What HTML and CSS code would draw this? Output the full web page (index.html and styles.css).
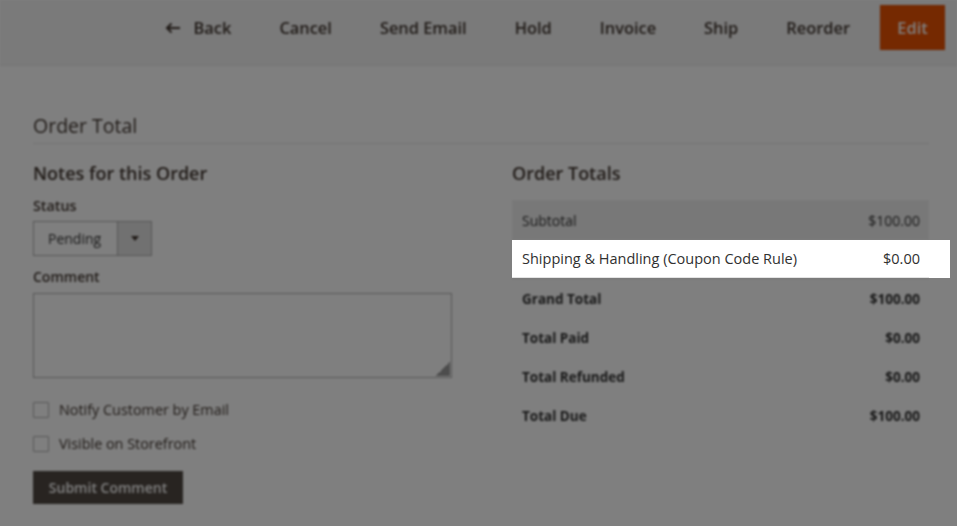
FILE: index.html
```html
<!DOCTYPE html>
<html>
<head>
<meta charset="utf-8">
<link rel="stylesheet" href="styles.css">
</head>
<body>
<div class="stage">
  <div class="page">
    <header class="actions">
      <button class="act back"><svg class="arrow" viewBox="0 0 16 12" width="16" height="12"><path d="M15 6H2M6.5 1.5L2 6l4.5 4.5" fill="none" stroke="currentColor" stroke-width="2"/></svg>Back</button>
      <button class="act">Cancel</button>
      <button class="act">Send Email</button>
      <button class="act">Hold</button>
      <button class="act">Invoice</button>
      <button class="act">Ship</button>
      <button class="act">Reorder</button>
      <button class="act primary">Edit</button>
    </header>
    <main class="content">
      <h2 class="section-title">Order Total</h2>
      <div class="cols">
        <section class="notes">
          <h3 class="sub-title">Notes for this Order</h3>
          <label class="field-label">Status</label>
          <div class="select"><span class="select-value">Pending</span><span class="select-arrow"></span></div>
          <label class="field-label comment-label">Comment</label>
          <div class="textarea"><span class="grip"></span></div>
          <div class="check"><span class="box"></span>Notify Customer by Email</div>
          <div class="check"><span class="box"></span>Visible on Storefront</div>
          <button class="submit">Submit Comment</button>
        </section>
        <section class="totals">
          <h3 class="sub-title">Order Totals</h3>
          <div class="table">
            <div class="row subtotal"><span>Subtotal</span><span>$100.00</span></div>
            <div class="row plain"><span>Shipping &amp; Handling (Coupon Code Rule)</span><span>$0.00</span></div>
            <div class="row strong"><span>Grand Total</span><span>$100.00</span></div>
            <div class="row strong"><span>Total Paid</span><span>$0.00</span></div>
            <div class="row strong"><span>Total Refunded</span><span>$0.00</span></div>
            <div class="row strong"><span>Total Due</span><span>$100.00</span></div>
          </div>
        </section>
      </div>
    </main>
  </div>
  <div class="overlay"></div>
  <div class="spotlight">
    <div class="spot-row"><span>Shipping &amp; Handling (Coupon Code Rule)</span><span>$0.00</span></div>
  </div>
</div>
</body>
</html>
```
FILE: styles.css
```css
* { box-sizing: border-box; }
html, body { margin: 0; padding: 0; }
body {
  font-family: "Open Sans", "Liberation Sans", sans-serif;
  color: #41362f;
  background: #fff;
  width: 957px;
  height: 526px;
  overflow: hidden;
}
.stage { position: relative; width: 957px; height: 526px; overflow: hidden; }
.page { filter: blur(1.1px); background: #fff; height: 526px; }

.actions {
  height: 66px;
  background: #f4f4f4;
  border-bottom: 1px solid #e8e8e8;
  display: flex;
  align-items: center;
  justify-content: flex-end;
  padding: 0 12px 10px 0;
}
.act {
  font-family: inherit;
  font-size: 16.4px;
  font-weight: 600;
  color: #41362f;
  background: none;
  border: 0;
  padding: 0;
  margin-left: 48px;
  display: flex;
  align-items: center;
  height: 45px;
}
.act.back { margin-left: 0; }
.arrow { margin-right: 13px; }
.act.primary {
  background: #eb5202;
  color: #fff;
  margin-left: 30px;
  width: 65px;
  justify-content: center;
  border: 1px solid #e04f02;
}

.content { padding: 48px 28px 0 33px; }
.section-title {
  margin: 0;
  font-size: 19.5px;
  font-weight: 400;
  line-height: 24px;
  padding-bottom: 5px;
  border-bottom: 1px solid #e3e3e3;
}
.cols {
  display: grid;
  grid-template-columns: 419px 417px;
  justify-content: space-between;
  margin-top: 18px;
}
.sub-title {
  margin: 0;
  font-size: 18px;
  font-weight: 600;
  line-height: 22px;
}
.field-label {
  display: block;
  margin-top: 12px;
  font-size: 14.3px;
  font-weight: 600;
  line-height: 19px;
}
.comment-label { margin-top: 11px; font-size: 14px; }
.select {
  margin-top: 6px;
  width: 119px;
  height: 35px;
  border: 1px solid #adadad;
  display: flex;
  background: #fff;
}
.select-value {
  flex: 1;
  font-size: 14px;
  padding-left: 14px;
  line-height: 33px;
  color: #303030;
}
.select-arrow {
  width: 34px;
  background: #e3e3e3;
  border-left: 1px solid #adadad;
  position: relative;
}
.select-arrow::after {
  content: "";
  position: absolute;
  left: 13px;
  top: 14px;
  border-left: 4px solid transparent;
  border-right: 4px solid transparent;
  border-top: 5px solid #41362f;
}
.textarea {
  margin-top: 7px;
  width: 419px;
  height: 85px;
  border: 1px solid #adadad;
  position: relative;
}
.grip {
  position: absolute;
  right: 1px;
  bottom: 1px;
  width: 14px;
  height: 14px;
  background: linear-gradient(135deg, transparent 50%, #9a9a9a 50%);
}
.check {
  display: flex;
  align-items: center;
  font-size: 14.4px;
  line-height: 20px;
  height: 20px;
  margin-top: 14px;
  color: #41362f;
}
.textarea + .check { margin-top: 22px; }
.box {
  width: 16px;
  height: 16px;
  border: 1px solid #adadad;
  border-radius: 1px;
  margin-right: 10px;
  background: #fff;
}
.submit {
  margin-top: 17px;
  display: block;
  width: 150px;
  height: 33px;
  background: #514943;
  border: 1px solid #514943;
  color: #fff;
  font-family: inherit;
  font-size: 14px;
  font-weight: 600;
  padding: 0;
}

.table { margin-top: 16px; }
.row {
  display: flex;
  justify-content: space-between;
  align-items: center;
  height: 39px;
  padding: 0 9px 0 10px;
  font-size: 14px;
  color: #303030;
}
.row.subtotal { background: #f1f1f1; height: 40px; color: #303030; }
.row.plain { border-bottom: 1px solid #e3e3e3; font-size: 14.5px; }
.row.strong { font-weight: 700; font-size: 13.5px; color: #303030; }

.overlay {
  position: absolute;
  inset: 0;
  background: rgba(0, 0, 0, 0.5);
}
.spotlight {
  position: absolute;
  left: 512px;
  top: 240px;
  width: 438px;
  height: 38px;
  background: #fff;
}
.spot-row {
  width: 417px;
  height: 38px;
  display: flex;
  justify-content: space-between;
  align-items: center;
  padding: 0 9px 0 10px;
  font-size: 14.5px;
  color: #303030;
  border-bottom: 1px solid #e3e3e3;
}
```
